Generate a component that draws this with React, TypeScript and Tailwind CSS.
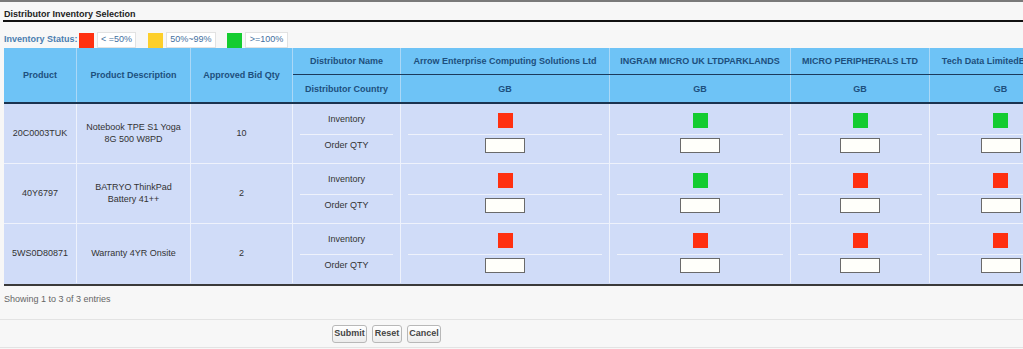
import React from "react";

type Status = "red" | "green" | "yellow";

const distributors: { name: string; w: string; statuses: Status[] }[] = [
  { name: "Arrow Enterprise Computing Solutions Ltd", w: "w-[209px]", statuses: ["red", "red", "red"] },
  { name: "INGRAM MICRO UK LTDPARKLANDS", w: "w-[181px]", statuses: ["green", "green", "red"] },
  { name: "MICRO PERIPHERALS LTD", w: "w-[139px]", statuses: ["green", "red", "red"] },
  { name: "Tech Data LimitedBracknell", w: "w-[142px]", statuses: ["green", "red", "red"] },
];

const rows: { product: string; desc: React.ReactNode; qty: string }[] = [
  {
    product: "20C0003TUK",
    desc: (
      <>
        Notebook TPE S1 Yoga
        <br />
        8G 500 W8PD
      </>
    ),
    qty: "10",
  },
  {
    product: "40Y6797",
    desc: (
      <>
        BATRYO ThinkPad
        <br />
        Battery 41++
      </>
    ),
    qty: "2",
  },
  { product: "5WS0D80871", desc: <>Warranty 4YR Onsite</>, qty: "2" },
];

function Square({ s }: { s: Status }) {
  const c = s === "red" ? "bg-[#ff3010]" : s === "green" ? "bg-[#14cc30]" : "bg-[#fdcf2a]";
  return <div className={`w-[15px] h-[15px] ${c}`} />;
}

function SplitCell({ w, top, bottom }: { w: string; top: React.ReactNode; bottom: React.ReactNode }) {
  return (
    <div className={`${w} shrink-0 border-r border-r-[#eef2fc] flex flex-col`}>
      <div className="h-[30px] pt-[2px] flex items-center justify-center">{top}</div>
      <div className="mx-[7px] h-px bg-[#eef2fc]" />
      <div className="h-[21px] flex items-center justify-center">{bottom}</div>
      <div className="h-[7px]" />
    </div>
  );
}

export default function App() {
  return (
    <div className="w-[1023px] h-[349px] overflow-hidden bg-[#f7f7f7] font-['Liberation_Sans',Arial,sans-serif] text-[9px] text-[#333]">
      <div className="h-[2px] bg-[#7a7a7a]" />
      <div className="pl-[4px] pt-[7px] leading-[11px] font-bold text-[#222]">
        Distributor Inventory Selection
      </div>
      <div className="ml-[3px] h-[2px] bg-[#111]" />

      <div className="mt-[10px] flex items-center h-[16px] pl-[4px]">
        <span className="font-bold text-[#4a7db0] w-[75px]">Inventory Status:</span>
        <Square s="red" />
        <div className="ml-[3px] w-[39px] h-[16px] bg-white border border-[#e2e2e2] flex items-center justify-center text-[#4470a0]">
          &lt; =50%
        </div>
        <div className="ml-[12px]">
          <Square s="yellow" />
        </div>
        <div className="ml-[3px] w-[50px] h-[16px] bg-white border border-[#e2e2e2] flex items-center justify-center text-[#4470a0]">
          50%~99%
        </div>
        <div className="ml-[11px]">
          <Square s="green" />
        </div>
        <div className="ml-[3px] w-[43px] h-[16px] bg-white border border-[#e2e2e2] flex items-center justify-center text-[#4470a0]">
          &gt;=100%
        </div>
      </div>

      {/* table */}
      <div className="ml-[4px] w-[1068px]">
        {/* header */}
        <div className="flex bg-[#6ec3f6] font-bold text-[#1d4f7d]">
          <div className="w-[73px] h-[54px] pt-[2px] shrink-0 border-r border-r-[#aad8f7] flex items-center justify-center">
            Product
          </div>
          <div className="w-[114px] h-[54px] pt-[2px] shrink-0 border-r border-r-[#aad8f7] flex items-center justify-center">
            Product Description
          </div>
          <div className="w-[102px] h-[54px] pt-[2px] shrink-0 border-r border-r-[#aad8f7] flex items-center justify-center">
            Approved Bid Qty
          </div>
          <div className="flex flex-col">
            <div className="flex h-[27px] border-b border-b-[#1c3a5c]">
              <div className="w-[108px] pt-[2px] shrink-0 border-r border-r-[#aad8f7] flex items-center justify-center">
                Distributor Name
              </div>
              {distributors.map((d) => (
                <div
                  key={d.name}
                  className={`${d.w} pt-[2px] shrink-0 border-r border-r-[#aad8f7] flex items-center justify-center whitespace-nowrap`}
                >
                  {d.name}
                </div>
              ))}
            </div>
            <div className="flex h-[27px]">
              <div className="w-[108px] pt-[2px] shrink-0 border-r border-r-[#aad8f7] flex items-center justify-center">
                Distributor Country
              </div>
              {distributors.map((d) => (
                <div
                  key={d.name}
                  className={`${d.w} pt-[2px] shrink-0 border-r border-r-[#aad8f7] flex items-center justify-center`}
                >
                  GB
                </div>
              ))}
            </div>
          </div>
        </div>
        <div className="h-[2px] bg-[#1a3350]" />

        {/* body */}
        <div className="bg-[#d0dcf8]">
          {rows.map((r, i) => (
            <div
              key={r.product}
              className={`flex border-b ${i < rows.length - 1 ? "border-b-[#eef2fc]" : "border-b-[#d0dcf8]"}`}
            >
              <div className="w-[73px] h-[59px] shrink-0 border-r border-r-[#eef2fc] flex items-center justify-center">
                {r.product}
              </div>
              <div className="w-[114px] h-[59px] shrink-0 border-r border-r-[#eef2fc] flex items-center justify-center text-center leading-[12px]">
                <div className="-mt-[2px]">{r.desc}</div>
              </div>
              <div className="w-[102px] h-[59px] shrink-0 border-r border-r-[#eef2fc] flex items-center justify-center">
                {r.qty}
              </div>
              <SplitCell w="w-[108px]" top={<span>Inventory</span>} bottom={<span>Order QTY</span>} />
              {distributors.map((d) => (
                <SplitCell
                  key={d.name}
                  w={d.w}
                  top={<Square s={d.statuses[i]} />}
                  bottom={<div className="w-[40px] h-[15px] bg-[#fffffa] border border-[#6a6a6a]" />}
                />
              ))}
            </div>
          ))}
        </div>
        <div className="h-[2px] bg-[#3a3a3a]" />
      </div>

      <div className="pl-[4px] pt-[8px] leading-[11px] text-[#666]">Showing 1 to 3 of 3 entries</div>
      <div className="mt-[14px] h-px bg-[#e3e3e3]" />
      <div className="flex gap-[5px] pl-[332px] pt-[5px]">
        <button className="w-[35px] h-[18px] rounded-[3px] border border-[#b8b8b8] bg-gradient-to-b from-white to-[#ececec] font-bold text-[#444] text-[9px]">
          Submit
        </button>
        <button className="w-[30px] h-[18px] rounded-[3px] border border-[#b8b8b8] bg-gradient-to-b from-white to-[#ececec] font-bold text-[#444] text-[9px]">
          Reset
        </button>
        <button className="w-[34px] h-[18px] rounded-[3px] border border-[#b8b8b8] bg-gradient-to-b from-white to-[#ececec] font-bold text-[#444] text-[9px]">
          Cancel
        </button>
      </div>
      <div className="mt-[4px] h-px bg-[#e3e3e3]" />
    </div>
  );
}
